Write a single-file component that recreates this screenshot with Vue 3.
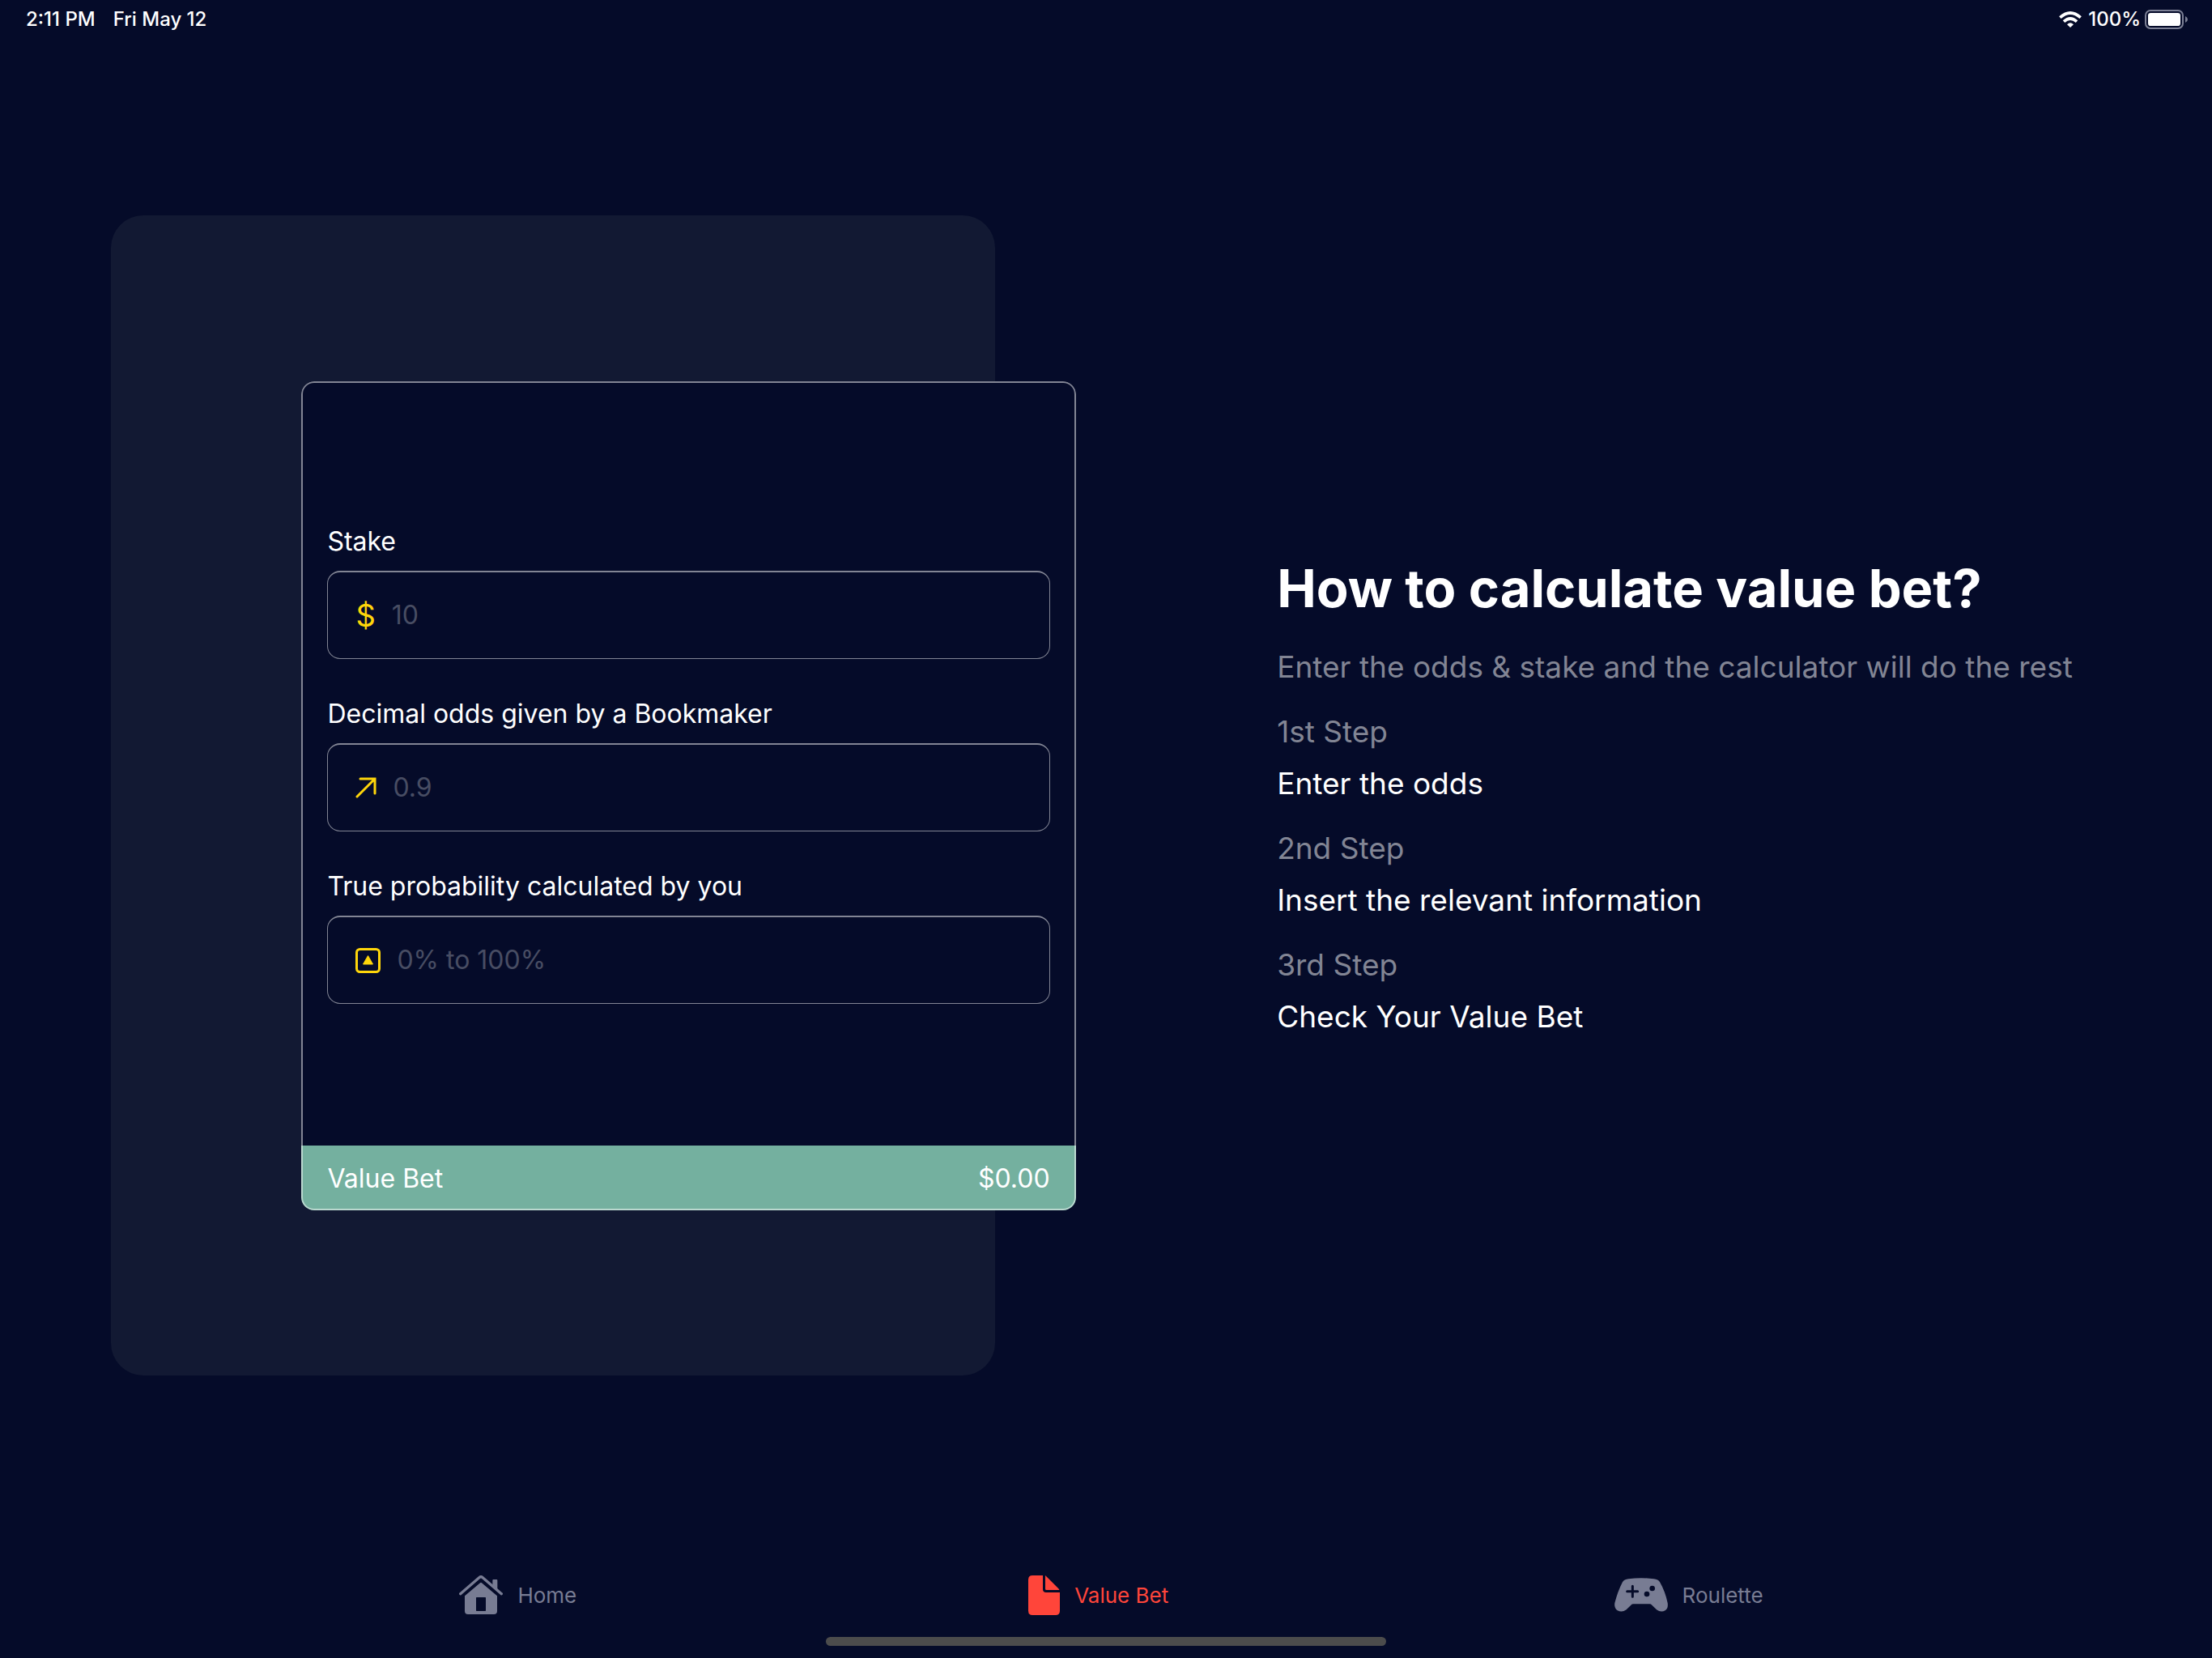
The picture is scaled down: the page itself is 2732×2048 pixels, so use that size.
<script setup>
import { computed, reactive } from 'vue'

const form = reactive({ stake: '', odds: '', probability: '' })

const fields = [
  { key: 'stake', label: 'Stake', placeholder: '10', icon: 'dollar' },
  { key: 'odds', label: 'Decimal odds given by a Bookmaker', placeholder: '0.9', icon: 'arrow' },
  { key: 'probability', label: 'True probability calculated by you', placeholder: '0% to 100%', icon: 'square' },
]

const steps = [
  { name: '1st Step', text: 'Enter the odds' },
  { name: '2nd Step', text: 'Insert the relevant information' },
  { name: '3rd Step', text: 'Check Your Value Bet' },
]

const valueBet = computed(() => {
  const stake = parseFloat(form.stake)
  const odds = parseFloat(form.odds)
  const probability = parseFloat(form.probability)
  const value = (probability / 100) * odds * stake - stake
  return '$' + (Number.isFinite(value) ? value : 0).toFixed(2)
})
</script>

<template>
  <div class="page">
    <header class="status">
      <div class="status-left">
        <span>2:11 PM</span>
        <span>Fri May 12</span>
      </div>
      <div class="status-right">
        <svg class="wifi" viewBox="130 42 82 60" aria-hidden="true">
          <g fill="none" stroke="#fff" stroke-width="11">
            <path d="M133 65Q171 31 209 65" />
            <path d="M147 80Q171 58 195 80" />
          </g>
          <path d="M171 102L159 91Q171 79 183 91Z" fill="#fff" />
        </svg>
        <span class="percent">100%</span>
        <svg class="battery" viewBox="447 36 159 72" aria-hidden="true">
          <rect x="450" y="39" width="138" height="66" rx="18" fill="none" stroke="#7c8095" stroke-width="6" />
          <rect x="459" y="48" width="120" height="48" rx="10" fill="#fff" />
          <path d="M597 60Q606 64 606 72Q606 80 597 84Z" fill="#7c8095" />
        </svg>
      </div>
    </header>

    <main class="content">
      <section class="stage">
        <div class="panel"></div>
        <form class="card" @submit.prevent>
          <div class="fields">
            <div v-for="field in fields" :key="field.key" class="field">
              <label :for="field.key">{{ field.label }}</label>
              <div class="box">
                <span v-if="field.icon === 'dollar'" class="dollar">$</span>
                <svg v-else-if="field.icon === 'arrow'" class="arrow" viewBox="0 0 26 26" aria-hidden="true">
                  <path d="M2 24L24 2M6 2H24V20" fill="none" stroke="#ffd60a" stroke-width="3" stroke-linecap="round" stroke-linejoin="miter" />
                </svg>
                <svg v-else class="square" viewBox="0 0 31 31" aria-hidden="true">
                  <rect x="1.5" y="1.5" width="28" height="28" rx="4" fill="none" stroke="#ffd60a" stroke-width="3" />
                  <path d="M15.500 9.500L21.500 20H9.500Z" fill="#ffd60a" stroke="#ffd60a" stroke-linejoin="round" />
                </svg>
                <input :id="field.key" v-model="form[field.key]" type="text" inputmode="decimal" :placeholder="field.placeholder" />
              </div>
            </div>
          </div>
          <div class="result">
            <span>Value Bet</span>
            <output>{{ valueBet }}</output>
          </div>
        </form>
      </section>

      <section class="guide">
        <h1>How to calculate value bet?</h1>
        <p class="muted">Enter the odds &amp; stake and the calculator will do the rest</p>
        <div v-for="step in steps" :key="step.name" class="step">
          <p class="muted">{{ step.name }}</p>
          <p>{{ step.text }}</p>
        </div>
      </section>
    </main>

    <footer class="bottom">
      <nav class="tabs">
        <button type="button" class="tab">
          <svg class="home" viewBox="84 75 162 144" fill="currentColor" aria-hidden="true">
            <path d="M208 119V93Q208 90 211 90H223Q226 90 226 93V134Z" />
            <path d="M89 143L160 82Q165 78 170 82L241 143" fill="none" stroke="currentColor" stroke-width="10" stroke-linecap="round" />
            <path fill-rule="evenodd" d="M162 103Q165 100 168 103L225 151V207Q225 219 213 219H117Q105 219 105 207V151ZM149 156Q147 156 147 158V205Q147 207 149 207H181Q183 207 183 205V158Q183 156 181 156Z" />
          </svg>
          <span>Home</span>
        </button>
        <button type="button" class="tab active" aria-current="page">
          <svg class="doc" viewBox="93 78 117 147" fill="currentColor" aria-hidden="true">
            <path d="M109 78H147V129Q147 141 159 141H210V209Q210 225 194 225H109Q93 225 93 209V94Q93 78 109 78Z" />
            <path d="M156 79Q158 79 160 82L205 127Q208 130 208 132H160Q156 132 156 128Z" />
          </svg>
          <span>Value Bet</span>
        </button>
        <button type="button" class="tab">
          <svg class="pad" viewBox="96 87 198 126" fill="currentColor" aria-hidden="true">
            <path d="M125 104Q132 92 148 91Q195 84 242 91Q258 92 265 104Q284 137 293 180Q296 199 284 208Q268 217 252 205L235 188Q231 184 226 184H166Q161 184 157 188L140 205Q124 217 107 208Q94 199 97 180Q108 137 125 104Z" />
            <path d="M143 137H182M163 118V157" fill="none" stroke="#050b29" stroke-width="9" stroke-linecap="round" />
            <circle cx="216" cy="147" r="10" fill="#050b29" />
            <circle cx="236" cy="126" r="10" fill="#050b29" />
          </svg>
          <span>Roulette</span>
        </button>
      </nav>
      <div class="indicator"></div>
    </footer>
  </div>
</template>

<style>
body {
  background: #050b29;
}
</style>

<style scoped>
.page {
  display: flex;
  flex-direction: column;
  min-height: 100vh;
  color: #fff;
  background: #050b29;
  font-family: Inter, "Liberation Sans", sans-serif;
}

.status {
  display: flex;
  justify-content: space-between;
  align-items: center;
  height: 48px;
  padding: 0 30px 0 32px;
  font-size: 24px;
  font-weight: 500;
  line-height: 28px;
}

.status-left {
  display: flex;
  gap: 22px;
}

.status-right {
  display: flex;
  align-items: center;
}

.wifi {
  width: 28px;
  height: 20px;
  margin-right: 8px;
}

.percent {
  margin-right: 5px;
}

.battery {
  width: 53px;
  height: 24px;
}

.content {
  flex: 1;
  display: flex;
  align-items: center;
  padding-left: 5%;
}

.stage {
  display: grid;
  grid-template-columns: 43.63vw;
  align-items: center;
}

.panel,
.card {
  grid-area: 1 / 1;
}

.panel {
  width: 40vw;
  height: 70vh;
  border-radius: 40px;
  background: #121933;
}

.card {
  position: relative;
  display: flex;
  flex-direction: column;
  justify-self: end;
  box-sizing: border-box;
  width: 35vw;
  min-height: 50vh;
  overflow: hidden;
  border-radius: 16px;
  background: #050b29;
}

.card::after {
  content: "";
  position: absolute;
  inset: 0;
  border: 2px solid rgba(255, 255, 255, 0.5);
  border-radius: 16px;
  pointer-events: none;
}

.fields {
  flex: 1;
  display: flex;
  flex-direction: column;
  justify-content: center;
  gap: 48px;
  padding: 4px 32px 0;
}

.field {
  display: flex;
  flex-direction: column;
  gap: 16px;
  font-size: 32px;
  line-height: 40px;
}

.box {
  display: flex;
  align-items: center;
  gap: 20px;
  box-sizing: border-box;
  height: 109px;
  padding: 0 34px;
  border: 1px solid #828594;
  border-top-width: 2px;
  border-radius: 16px;
}

.box input {
  flex: 1;
  min-width: 0;
  padding: 0;
  border: 0;
  outline: 0;
  color: #fff;
  background: none;
  font: inherit;
}

.box input::placeholder {
  color: #484d63;
  opacity: 1;
}

.dollar {
  color: #ffd60a;
  font-size: 38px;
}

.arrow {
  width: 26px;
  height: 26px;
}

.square {
  width: 31px;
  height: 31px;
}

.result {
  display: flex;
  justify-content: space-between;
  align-items: center;
  box-sizing: border-box;
  height: 80px;
  padding: 2px 32px 0;
  background: #74b09f;
  font-size: 32px;
  line-height: 40px;
}

.guide {
  display: flex;
  flex-direction: column;
  margin-left: 9.1vw;
  font-size: 37px;
  line-height: 48px;
}

h1,
p {
  margin: 0;
}

h1 {
  margin-bottom: 32px;
  font-size: 65px;
  font-weight: 700;
  line-height: 82px;
}

.muted {
  color: #828594;
}

.step {
  display: flex;
  flex-direction: column;
  gap: 16px;
  margin-top: 32px;
}

.bottom {
  display: flex;
  flex-direction: column;
  align-items: center;
  box-sizing: border-box;
  height: 131px;
  padding-top: 21px;
}

.tabs {
  align-self: stretch;
  display: grid;
  grid-template-columns: 716fr 716fr 740fr;
  padding: 0 10.1% 0 10.3%;
}

.tab {
  display: flex;
  justify-content: center;
  align-items: center;
  gap: 18px;
  height: 64px;
  padding: 0;
  border: 0;
  color: #787c93;
  background: none;
  font-family: inherit;
  font-size: 26px;
  line-height: 32px;
}

.tab span {
  padding-top: 2px;
}

.tab.active {
  color: #ff453a;
}

.home {
  width: 54px;
  height: 48px;
}

.doc {
  width: 39px;
  height: 49px;
}

.pad {
  width: 66px;
  height: 42px;
}

.indicator {
  width: 25.3%;
  height: 11px;
  margin-top: 20px;
  border-radius: 6px;
  background: #4c4c4c;
}
</style>
